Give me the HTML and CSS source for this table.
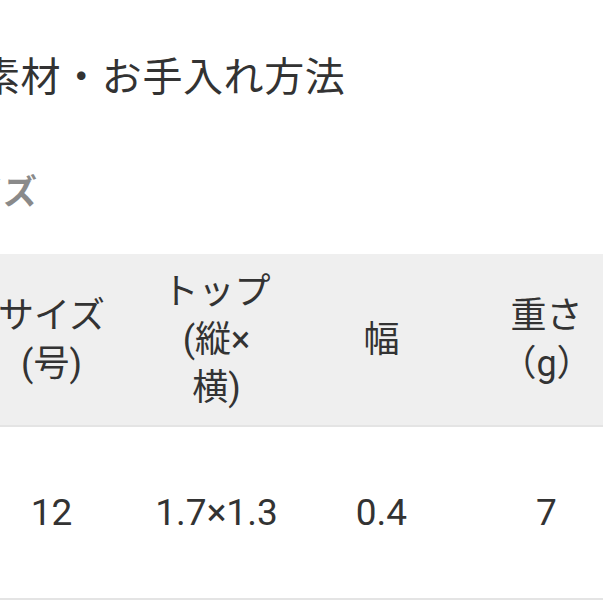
FILE: index.html
```html
<!DOCTYPE html>
<html lang="ja">
<head>
<meta charset="utf-8">
<link rel="stylesheet" href="styles.css">
</head>
<body>
<div class="page">
  <h2 class="title">素材・お手入れ方法</h2>
  <h3 class="section">サイズ</h3>
  <div class="table">
    <div class="row head">
      <div class="cell">サイズ<br>(号)</div>
      <div class="cell">トップ<br>(縦×<br>横)</div>
      <div class="cell">幅</div>
      <div class="cell">重さ<br>（g）</div>
      <div class="cell"></div>
    </div>
    <div class="row body">
      <div class="cell">12</div>
      <div class="cell">1.7×1.3</div>
      <div class="cell">0.4</div>
      <div class="cell">7</div>
      <div class="cell"></div>
    </div>
  </div>
</div>
</body>
</html>
```
FILE: styles.css
```css
html, body {
  margin: 0;
  padding: 0;
  background: #ffffff;
  overflow: hidden;
}
body {
  width: 603px;
  height: 603px;
  font-family: Roboto, "Noto Sans CJK JP", sans-serif;
  color: #333333;
}
.page {
  margin-left: -20px;
  width: 700px;
  padding-top: 45px;
}
.title {
  margin: 0;
  font-family: "Noto Sans CJK JP", sans-serif;
  font-size: 40px;
  font-weight: 400;
  letter-spacing: 0.6px;
  line-height: 58px;
  color: #333333;
}
.section {
  margin: 63px 0 0 -44px;
  font-family: "Noto Sans CJK JP", sans-serif;
  font-size: 34px;
  font-weight: 700;
  line-height: 48px;
  color: #8a8a8a;
}
.table {
  margin-top: 40px;
  margin-left: -11px;
}
.row {
  display: grid;
  grid-template-columns: repeat(4, 165px) 1fr;
  align-items: center;
  height: 171px;
  text-align: center;
}
.head {
  background: #efefef;
  border-bottom: 2px solid #e4e4e4;
  font-size: 36px;
  line-height: 48px;
}
.body {
  background: #ffffff;
  border-bottom: 2px solid #e4e4e4;
  font-size: 37px;
  line-height: 48px;
}
```
